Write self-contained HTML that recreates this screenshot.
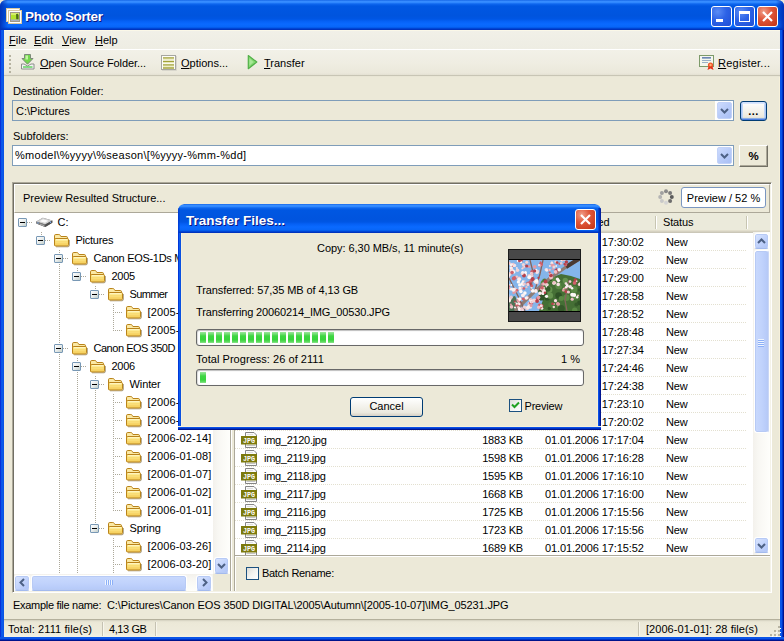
<!DOCTYPE html><html><head><meta charset="utf-8"><title>Photo Sorter</title><style>
*{box-sizing:border-box;margin:0;padding:0}
html,body{width:784px;height:641px;overflow:hidden;background:#ece9d8}
body{position:relative;font-family:"Liberation Sans","DejaVu Sans",sans-serif;font-size:11px;color:#000;line-height:13px}
.a{position:absolute}
.t{position:absolute;white-space:pre;height:13px;line-height:13px}
u{text-decoration:underline;text-underline-offset:1px}
#title{left:0;top:0;width:784px;height:30px;border-radius:6px 6px 0 0;
 background:linear-gradient(to bottom,#0a5be0 0,#3a8eff 1px,#3088fe 2.5px,#0e66ee 4px,#0057e2 6px,#0054de 16px,#0056e4 19px,#0560f4 21px,#0a6aff 24px,#0866f8 27px,#0052e0 28px,#0038c8 29px,#002fb4 30px)}
#title:before{content:"";position:absolute;left:0;top:0;width:8px;height:30px;border-radius:6px 0 0 0;background:linear-gradient(to right,#0033b8,rgba(0,60,220,0))}
#title:after{content:"";position:absolute;right:0;top:0;width:8px;height:30px;border-radius:0 6px 0 0;background:linear-gradient(to left,#0033b8,rgba(0,60,220,0))}
.ttxt{font-weight:bold;font-size:13px;color:#fff;text-shadow:1px 1px 0 #0a1883;height:16px;line-height:16px}
.bl{left:0;top:30px;width:4px;height:611px;background:linear-gradient(to right,#0831d9 0,#0831d9 1px,#0a50e6 1px,#0c5cec 2px,#0a52e2 4px)}
.br{left:779px;top:30px;width:5px;height:611px;background:linear-gradient(to right,#f6f0da 0,#f6f0da 1px,#0a55e8 1px,#0a55e8 3px,#0033c8 3px,#0033c8 4px,#00138c 4px)}
.bb{left:0;top:637px;width:784px;height:4px;background:linear-gradient(to bottom,#0a55e8 0,#0a55e8 2px,#0033c8 2px,#0033c8 3px,#00138c 3px)}
.cb{width:21px;height:21px;border:1px solid #fff;border-radius:3px;background:radial-gradient(circle at 30% 25%,#5a8cf5 0,#2c62e6 45%,#1f4fd6 100%)}
.cb.x{background:radial-gradient(circle at 30% 25%,#f0a08a 0,#e0573a 40%,#c23314 100%)}
.menu{left:4px;top:30px;width:776px;height:19px;background:linear-gradient(to bottom,#f1f0e8,#eeede3);border-top:1px solid #fbf8e8}
.tb{left:4px;top:49px;width:776px;height:28px;background:linear-gradient(to bottom,#fff 0,#fff 1px,#f2f1e8 1px,#efede2 14px,#ebe8db 24px,#e4e1d2 26px,#c8c5b5 26px,#c8c5b5 27px,#e6e3d2 27px,#ece9d8 28px)}
.combo{border:1px solid #7f9db9;background:#fff}
.dd{width:15px;height:17px;border:1px solid #c2d2f8;border-radius:2px;background:linear-gradient(135deg,#cddbfd 0%,#b9ccf9 50%,#a9bff5 100%)}
.btn{border:1px solid #003c74;border-radius:3px;background:linear-gradient(to bottom,#fff 0,#f5f4ef 40%,#eceadf 80%,#d6d0c5 100%);text-align:center}
.btn.def{box-shadow:inset 0 -1px 0 #4a7ce0, inset 0 1px 0 #cfe0fd, inset 1px 0 0 #a8c4f4, inset -1px 0 0 #a8c4f4, inset 0 -2px 0 #89ade4, inset 0 2px 0 #dbe8fe, inset 2px 0 0 #c0d6f8, inset -2px 0 0 #c0d6f8}
.panel{left:12px;top:182px;width:760px;height:411px;border:1px solid;border-color:#aca899 #fff #fff #aca899;box-shadow:inset 1px 1px 0 #716f64,inset -1px -1px 0 #f4f2e8}
.hpanel{left:14px;top:184px;width:756px;height:29px;border:1px solid;border-color:#fff #aca899 #aca899 #fff}
.tree{left:14px;top:213px;width:216px;height:378px;background:#fff;overflow:hidden}
.list{left:234px;top:213px;width:536px;height:342px;background:#fff;border-left:1px solid #aca899;overflow:hidden}
.hdr{left:0;top:0;width:535px;height:20px;background:#ebeadb;border-bottom:1px solid #cbc7b8;box-shadow:inset 0 -1px 0 #d6d2c2, inset 0 -2px 0 #e2decd}
.hs{width:1px;height:13px;top:3px;background:#c7c5b2;box-shadow:1px 0 0 #fff}
.row{left:0;width:512px;height:18px;background:linear-gradient(to right,#e3e0d0 50%,#fff 50%) 0 17px/2px 1px repeat-x}
.sbv{width:17px;background:linear-gradient(to right,#f3f1ec 0,#f8f7f3 30%,#fefefb 100%)}
.sbh{height:17px;background:linear-gradient(to bottom,#f3f1ec 0,#f8f7f3 30%,#fefefb 100%)}
.sbtn{width:16px;height:16px;border:1px solid #fff;border-bottom-color:#a3baee;border-radius:3px;background:linear-gradient(135deg,#dbe6fe 0%,#c3d4fc 50%,#aec3f7 100%);box-shadow:inset 0 0 0 1px #b7caf5}
.thv{width:16px;border:1px solid #fff;border-right-color:#c9d6f6;border-radius:3px;background:linear-gradient(to right,#c9d9fd 0,#c1d3fc 50%,#b5c9f8 100%);box-shadow:inset 0 0 0 1px #b7caf5}
.thh{height:16px;border:1px solid #fff;border-bottom-color:#a3baee;border-radius:3px;background:linear-gradient(to bottom,#c9d9fd 0,#c1d3fc 50%,#b5c9f8 100%);box-shadow:inset 0 0 0 1px #b7caf5}
.pm{width:9px;height:9px;border:1px solid #7898b5;border-radius:1px;background:linear-gradient(135deg,#fff 0,#e8eceb 50%,#c3cfcb 100%)}
.pm:after{content:"";position:absolute;left:1px;top:3px;width:5px;height:1px;background:#000}
.vd{width:1px;background:repeating-linear-gradient(to bottom,#aca899 0,#aca899 1px,transparent 1px,transparent 2px)}
.hd{height:1px;background:repeating-linear-gradient(to right,#aca899 0,#aca899 1px,transparent 1px,transparent 2px)}
.chk{width:13px;height:13px;border:1px solid #1c5180;background:linear-gradient(135deg,#dcdcd7 0,#f3f3f0 50%,#fff 100%)}
.dlg{left:178px;top:204px;width:423px;height:226px;background:#ece9d8;border-radius:6px 6px 0 0;overflow:hidden}
.dtitle{left:0;top:0;width:423px;height:29px;border-radius:6px 6px 0 0;
 background:linear-gradient(to bottom,#0a5be0 0,#3a8eff 1px,#3088fe 2.5px,#0e66ee 4px,#0057e2 6px,#0054de 15px,#0056e4 18px,#0560f4 20px,#0a6aff 23px,#0866f8 26px,#0052e0 27px,#0038c8 28px,#002fb4 29px)}
.dtitle:after{content:"";position:absolute;right:0;top:4px;width:3px;height:25px;background:linear-gradient(to right,rgba(0,50,200,.35),#0030b8 50%,#001590)}
.dtitle:before{content:"";position:absolute;left:0;top:4px;width:2px;height:25px;background:linear-gradient(to right,#0037d0,rgba(0,70,220,.2))}
.dbl{left:0;top:29px;width:4px;height:197px;background:linear-gradient(to right,#0037d8 0,#0037d8 1px,#0c5cec 1px,#0c5cec 2px,#0a50e0 2px,#0a50e0 3px,#f6f0da 3px)}
.dbr{left:419px;top:29px;width:4px;height:197px;background:linear-gradient(to right,#f6f0da 0,#f6f0da 1px,#0b50e6 1px,#0b50e6 2px,#0034c6 2px,#0034c6 3px,#001590 3px)}
.dbb{left:0;top:222px;width:423px;height:4px;background:linear-gradient(to bottom,#f6f0da 0,#f6f0da 1px,#0b50e6 1px,#0b50e6 2px,#0034c6 2px,#0034c6 3px,#001590 3px)}
.pb{height:17px;border:1px solid #686868;border-radius:3px;background:#fff;box-shadow:inset 0 1px 1px #bebebe, inset 1px 0 1px #e0e0e0}
.ch{top:3px;width:6px;height:11px;background:linear-gradient(to bottom,#9be69b 0,#72de74 18%,#3ed642 36%,#38d43c 70%,#5edb60 88%,#90e490 100%)}
.sbar{left:4px;top:619px;width:776px;height:18px;background:linear-gradient(to bottom,#b4b09c 0,#b4b09c 1px,#d0cdbc 1px,#e2dfce 2px,#eae7d6 3px,#ece9d8 5px,#eeebdc 14px,#f3f1e4 18px)}
.ss{top:622px;width:1px;height:14px;background:#c5c2b2;box-shadow:1px 0 0 #f8f6ec}
</style></head><body>
<div class="a" id="title"></div>
<div class="a bl"></div><div class="a br"></div><div class="a bb"></div>
<svg class="a" style="left:6px;top:8px" width="16" height="16" viewBox="0 0 16 16"><rect x=".5" y=".5" width="13" height="13" fill="#fff" stroke="#d8c8a0"/><rect x="2" y="2" width="11" height="11" fill="#94d808"/><rect x="2.500" y="2.500" width="13" height="13" fill="#fff" stroke="#d8c8a0"/><rect x="4.500" y="4.500" width="9" height="9" fill="#b4e42c" stroke="#a09888"/><rect x="5" y="5" width="8" height="2" fill="#d4ee6a"/><path d="M10 6.200 q2 -1.200 2.500 .8 v4.500 h-2.200z" fill="#4a6a18"/><rect x="5" y="11.500" width="8" height="1.500" fill="#a8b0c0"/></svg>
<div class="t ttxt" style="left:25px;top:9px;letter-spacing:-0.35px;font-size:13.5px">Photo Sorter</div>
<div class="a cb" style="left:711px;top:6px"><div class="a" style="left:4px;top:12px;width:7px;height:3px;background:#fff"></div></div>
<div class="a cb" style="left:734px;top:6px"><div class="a" style="left:4px;top:4px;width:11px;height:11px;border:1px solid #fff;border-top-width:3px"></div></div>
<div class="a cb x" style="left:757px;top:6px"><svg class="a" style="left:3px;top:3px" width="13" height="13" viewBox="0 0 13 13"><path d="M2 2 L11 11 M11 2 L2 11" stroke="#fff" stroke-width="2.2"/></svg></div>
<div class="a menu"></div>
<div class="t" style="left:9px;top:34px"><u>F</u>ile</div>
<div class="t" style="left:34px;top:34px"><u>E</u>dit</div>
<div class="t" style="left:62px;top:34px"><u>V</u>iew</div>
<div class="t" style="left:95px;top:34px"><u>H</u>elp</div>
<div class="a tb"></div>
<div class="a" style="left:9px;top:55px;width:2px;height:19px;background:repeating-linear-gradient(to bottom,#b5b2a0 0,#b5b2a0 2px,transparent 2px,transparent 4px)"></div>
<svg class="a" style="left:20px;top:54px" width="16" height="16" viewBox="0 0 16 16"><path d="M4.500 .5 H10.5 V4.500 H13 L7.500 10.200 L2 4.500 H4.500Z" fill="#74d84e" stroke="#7d8a7a" stroke-width="1"/><path d="M5.500 1.500 H8 V5.500 H5.500Z" fill="#c4f4a4"/><path d="M1.500 10 H4 L7.500 12 L11 10 H14 V15 H1.500Z" fill="#f4f4f4" stroke="#8c8c8c"/><path d="M3 13 H12.5" stroke="#3cc83c" stroke-width="1.200"/></svg>
<div class="t" style="left:40px;top:57px;letter-spacing:-0.08px"><u>O</u>pen Source Folder...</div>
<svg class="a" style="left:160px;top:54px" width="17" height="17" viewBox="0 0 17 17"><rect x="1.500" y="1.500" width="14" height="14" fill="#fdfdf8" stroke="#a6a6a0"/><path d="M2 16.500H16.500V2" stroke="#d8d6cc" fill="none"/><path d="M3 4H14M3 7.500H14M3 11H14M3 14H14" stroke="#a2a238" stroke-width="1.300"/><path d="M3 5.200H14M3 8.700H14M3 12.200H14" stroke="#e6e6b4" stroke-width="1"/></svg>
<div class="t" style="left:181px;top:57px"><u>O</u>ptions...</div>
<svg class="a" style="left:246px;top:54px" width="14" height="17" viewBox="0 0 14 17"><path d="M2.300 1.500 L10.800 8 L2.300 14.700Z" fill="#84da72" stroke="#52b048" stroke-width="1.200" stroke-linejoin="round"/><path d="M3.500 4.500 L7.500 8 L3.500 11.500Z" fill="#a8e898"/></svg>
<div class="t" style="left:264px;top:57px"><u>T</u>ransfer</div>
<svg class="a" style="left:699px;top:54px" width="17" height="17" viewBox="0 0 17 17"><rect x=".5" y="1.500" width="14" height="11" fill="#f4f7ee" stroke="#7d9a6a"/><path d="M3 4.500H12M3 6.500H12M3 8.500H9" stroke="#9ab0c8" stroke-width="1"/><path d="M3 3.500H12" stroke="#6f86b5" stroke-width="1"/><circle cx="11.5" cy="11" r="2.600" fill="#f0552a"/><path d="M9.500 12.5 L8.500 16 L11.5 14.500 L14.500 16 L13.5 12.5Z" fill="#e2341a"/><circle cx="11.5" cy="11" r="1.200" fill="#ffb070"/></svg>
<div class="t" style="left:718px;top:57px;letter-spacing:0.25px"><u>R</u>egister...</div>
<div class="t" style="left:13px;top:85px;letter-spacing:-0.1px">Destination Folder:</div>
<div class="a combo" style="left:12px;top:100px;width:722px;height:21px;background:#ece9d8"></div>
<div class="t" style="left:16px;top:105px">C:\Pictures</div>
<div class="a" style="left:715px;top:101px;width:18px;height:19px;background:#fff"></div>
<div class="a dd" style="left:717px;top:102px"></div><svg class="a" style="left:720px;top:108px" width="9" height="6" viewBox="0 0 9 6"><path d="M1 1 L4.5 4.5 L8 1" fill="none" stroke="#4d6185" stroke-width="2"/></svg>
<div class="a btn def" style="left:740px;top:101px;width:27px;height:20px"><b style="position:absolute;left:0;width:25px;top:3px;letter-spacing:0.4px">...</b></div>
<div class="t" style="left:13px;top:130px">Subfolders:</div>
<div class="a combo" style="left:12px;top:145px;width:722px;height:21px"></div>
<div class="t" style="left:15px;top:149px;letter-spacing:0.28px">%model\%yyyy\%season\[%yyyy-%mm-%dd]</div>
<div class="a dd" style="left:717px;top:147px"></div><svg class="a" style="left:720px;top:153px" width="9" height="6" viewBox="0 0 9 6"><path d="M1 1 L4.5 4.5 L8 1" fill="none" stroke="#4d6185" stroke-width="2"/></svg>
<div class="a" style="left:739px;top:145px;width:29px;height:22px;background:#ece9d8;border:1px solid;border-color:#fff #716f64 #716f64 #fff;box-shadow:inset -1px -1px 0 #aca899;text-align:center"><b style="position:absolute;left:0;width:27px;top:4px;font-size:11.5px">%</b></div>
<div class="a panel"></div><div class="a hpanel"></div>
<div class="t" style="left:23px;top:192px">Preview Resulted Structure...</div>
<svg class="a" style="left:658px;top:189px" width="16" height="16" viewBox="0 0 16 16"><circle cx="8.00" cy="2.20" r="2" fill="#8a8a8a"/><circle cx="12.10" cy="3.90" r="2" fill="#787878"/><circle cx="13.80" cy="8.00" r="2" fill="#5c5c5c"/><circle cx="12.10" cy="12.10" r="2" fill="#6e6e6e"/><circle cx="8.00" cy="13.80" r="2" fill="#d4d4d4"/><circle cx="3.90" cy="12.10" r="2" fill="#c8c8c8"/><circle cx="2.20" cy="8.00" r="2" fill="#b4b4b4"/><circle cx="3.90" cy="3.90" r="2" fill="#a0a0a0"/></svg>
<div class="a btn" style="left:681px;top:187px;width:85px;height:21px;border-color:#7a96c0;background:#fff"><span class="t" style="left:0;width:83px;top:4px;text-align:center">Preview / 52 %</span></div>
<div class="a tree">
<div class="a vd" style="left:27px;top:19px;height:9px"></div>
<div class="a vd" style="left:45px;top:37px;height:325px"></div>
<div class="a vd" style="left:63px;top:55px;height:9px"></div>
<div class="a vd" style="left:81px;top:73px;height:9px"></div>
<div class="a vd" style="left:99px;top:91px;height:27px"></div>
<div class="a vd" style="left:63px;top:145px;height:217px"></div>
<div class="a vd" style="left:81px;top:163px;height:153px"></div>
<div class="a vd" style="left:99px;top:181px;height:117px"></div>
<div class="a vd" style="left:99px;top:325px;height:37px"></div>
<div class="a hd" style="left:13px;top:9px;width:5px"></div>
<div class="a pm" style="left:4px;top:5px"></div>
<svg class="a" style="left:22px;top:1px" width="17" height="16" viewBox="0 0 17 16"><path d="M0.300 7.400 L6.800 3.800 L16.300 6.600 L16.300 8.800 L9.200 13 L0.300 9.600Z" fill="#6a6a6a"/><path d="M0.300 7.400 L6.800 3.800 L16.300 6.600 L9.200 10.500Z" fill="#cfcfcf"/><path d="M3.500 7.200 L7 5.200 L12.500 6.800 L9 8.800Z" fill="#fafafa"/><path d="M0.300 7.400 L9.200 10.500 V13 L0.300 9.600Z" fill="#7a7a7a"/><path d="M9.200 10.500 L16.300 6.600 V8.800 L9.200 13Z" fill="#4e4e4e"/><circle cx="2" cy="8.900" r=".7" fill="#7fb4ff"/><circle cx="14.500" cy="8.300" r=".7" fill="#7fb4ff"/><path d="M4 10.200 L8 11.700" stroke="#b8b8b8" stroke-width=".8"/></svg>
<div class="t" style="left:43.5px;top:3px;letter-spacing:0.00px">C:</div>
<div class="a hd" style="left:31px;top:27px;width:5px"></div>
<div class="a pm" style="left:22px;top:23px"></div>
<svg class="a" style="left:40px;top:19px" width="16" height="16" viewBox="0 0 16 16"><path d="M0.500 13 V3.800 Q0.500 2.500 1.800 2.500 H4.800 Q5.800 2.500 6.300 3.400 L6.900 4.500 H12.2 Q13.5 4.500 13.5 5.800 V13Z" fill="#fbe9a4" stroke="#b9831a"/><path d="M2 14.800 H14 Q15.400 14.700 15.400 13.300 V8" fill="none" stroke="#6d5a2a" stroke-opacity=".55"/><rect x="0.500" y="6.500" width="14" height="7.500" rx="1.200" fill="#f6d262" stroke="#b9831a"/><rect x="1.300" y="7.300" width="12.400" height="2" fill="#fde98e"/><rect x="1.300" y="9.300" width="12.400" height="2" fill="#fade78"/><path d="M2 7.600H13.500" stroke="#fff6c4" stroke-width="1"/></svg>
<div class="t" style="left:61.5px;top:21px;letter-spacing:-0.25px">Pictures</div>
<div class="a hd" style="left:49px;top:45px;width:5px"></div>
<div class="a pm" style="left:40px;top:41px"></div>
<svg class="a" style="left:58px;top:37px" width="16" height="16" viewBox="0 0 16 16"><path d="M0.500 13 V3.800 Q0.500 2.500 1.800 2.500 H4.800 Q5.800 2.500 6.300 3.400 L6.900 4.500 H12.2 Q13.5 4.500 13.5 5.800 V13Z" fill="#fbe9a4" stroke="#b9831a"/><path d="M2 14.800 H14 Q15.400 14.700 15.400 13.300 V8" fill="none" stroke="#6d5a2a" stroke-opacity=".55"/><rect x="0.500" y="6.500" width="14" height="7.500" rx="1.200" fill="#f6d262" stroke="#b9831a"/><rect x="1.300" y="7.300" width="12.400" height="2" fill="#fde98e"/><rect x="1.300" y="9.300" width="12.400" height="2" fill="#fade78"/><path d="M2 7.600H13.500" stroke="#fff6c4" stroke-width="1"/></svg>
<div class="t" style="left:79.5px;top:39px;letter-spacing:-0.30px">Canon EOS-1Ds Mark II</div>
<div class="a hd" style="left:67px;top:63px;width:5px"></div>
<div class="a pm" style="left:58px;top:59px"></div>
<svg class="a" style="left:76px;top:55px" width="16" height="16" viewBox="0 0 16 16"><path d="M0.500 13 V3.800 Q0.500 2.500 1.800 2.500 H4.800 Q5.800 2.500 6.300 3.400 L6.900 4.500 H12.2 Q13.5 4.500 13.5 5.800 V13Z" fill="#fbe9a4" stroke="#b9831a"/><path d="M2 14.800 H14 Q15.400 14.700 15.400 13.300 V8" fill="none" stroke="#6d5a2a" stroke-opacity=".55"/><rect x="0.500" y="6.500" width="14" height="7.500" rx="1.200" fill="#f6d262" stroke="#b9831a"/><rect x="1.300" y="7.300" width="12.400" height="2" fill="#fde98e"/><rect x="1.300" y="9.300" width="12.400" height="2" fill="#fade78"/><path d="M2 7.600H13.500" stroke="#fff6c4" stroke-width="1"/></svg>
<div class="t" style="left:97.5px;top:57px;letter-spacing:-0.30px">2005</div>
<div class="a hd" style="left:85px;top:81px;width:5px"></div>
<div class="a pm" style="left:76px;top:77px"></div>
<svg class="a" style="left:94px;top:73px" width="16" height="16" viewBox="0 0 16 16"><path d="M0.500 13 V3.800 Q0.500 2.500 1.800 2.500 H4.800 Q5.800 2.500 6.300 3.400 L6.900 4.500 H12.2 Q13.5 4.500 13.5 5.800 V13Z" fill="#fbe9a4" stroke="#b9831a"/><path d="M2 14.800 H14 Q15.400 14.700 15.400 13.300 V8" fill="none" stroke="#6d5a2a" stroke-opacity=".55"/><rect x="0.500" y="6.500" width="14" height="7.500" rx="1.200" fill="#f6d262" stroke="#b9831a"/><rect x="1.300" y="7.300" width="12.400" height="2" fill="#fde98e"/><rect x="1.300" y="9.300" width="12.400" height="2" fill="#fade78"/><path d="M2 7.600H13.500" stroke="#fff6c4" stroke-width="1"/></svg>
<div class="t" style="left:115.5px;top:75px;letter-spacing:-0.65px">Summer</div>
<div class="a hd" style="left:101px;top:99px;width:7px"></div>
<svg class="a" style="left:112px;top:91px" width="16" height="16" viewBox="0 0 16 16"><path d="M0.500 13 V3.800 Q0.500 2.500 1.800 2.500 H4.800 Q5.800 2.500 6.300 3.400 L6.900 4.500 H12.2 Q13.5 4.500 13.5 5.800 V13Z" fill="#fbe9a4" stroke="#b9831a"/><path d="M2 14.800 H14 Q15.400 14.700 15.400 13.300 V8" fill="none" stroke="#6d5a2a" stroke-opacity=".55"/><rect x="0.500" y="6.500" width="14" height="7.500" rx="1.200" fill="#f6d262" stroke="#b9831a"/><rect x="1.300" y="7.300" width="12.400" height="2" fill="#fde98e"/><rect x="1.300" y="9.300" width="12.400" height="2" fill="#fade78"/><path d="M2 7.600H13.500" stroke="#fff6c4" stroke-width="1"/></svg>
<div class="t" style="left:133.5px;top:93px;letter-spacing:0.12px">[2005-07-16]</div>
<div class="a hd" style="left:101px;top:117px;width:7px"></div>
<svg class="a" style="left:112px;top:109px" width="16" height="16" viewBox="0 0 16 16"><path d="M0.500 13 V3.800 Q0.500 2.500 1.800 2.500 H4.800 Q5.800 2.500 6.300 3.400 L6.900 4.500 H12.2 Q13.5 4.500 13.5 5.800 V13Z" fill="#fbe9a4" stroke="#b9831a"/><path d="M2 14.800 H14 Q15.400 14.700 15.400 13.300 V8" fill="none" stroke="#6d5a2a" stroke-opacity=".55"/><rect x="0.500" y="6.500" width="14" height="7.500" rx="1.200" fill="#f6d262" stroke="#b9831a"/><rect x="1.300" y="7.300" width="12.400" height="2" fill="#fde98e"/><rect x="1.300" y="9.300" width="12.400" height="2" fill="#fade78"/><path d="M2 7.600H13.500" stroke="#fff6c4" stroke-width="1"/></svg>
<div class="t" style="left:133.5px;top:111px;letter-spacing:0.12px">[2005-07-02]</div>
<div class="a hd" style="left:49px;top:135px;width:5px"></div>
<div class="a pm" style="left:40px;top:131px"></div>
<svg class="a" style="left:58px;top:127px" width="16" height="16" viewBox="0 0 16 16"><path d="M0.500 13 V3.800 Q0.500 2.500 1.800 2.500 H4.800 Q5.800 2.500 6.300 3.400 L6.900 4.500 H12.2 Q13.5 4.500 13.5 5.800 V13Z" fill="#fbe9a4" stroke="#b9831a"/><path d="M2 14.800 H14 Q15.400 14.700 15.400 13.300 V8" fill="none" stroke="#6d5a2a" stroke-opacity=".55"/><rect x="0.500" y="6.500" width="14" height="7.500" rx="1.200" fill="#f6d262" stroke="#b9831a"/><rect x="1.300" y="7.300" width="12.400" height="2" fill="#fde98e"/><rect x="1.300" y="9.300" width="12.400" height="2" fill="#fade78"/><path d="M2 7.600H13.500" stroke="#fff6c4" stroke-width="1"/></svg>
<div class="t" style="left:79.5px;top:129px;letter-spacing:-0.47px">Canon EOS 350D DIGITAL</div>
<div class="a hd" style="left:67px;top:153px;width:5px"></div>
<div class="a pm" style="left:58px;top:149px"></div>
<svg class="a" style="left:76px;top:145px" width="16" height="16" viewBox="0 0 16 16"><path d="M0.500 13 V3.800 Q0.500 2.500 1.800 2.500 H4.800 Q5.800 2.500 6.300 3.400 L6.900 4.500 H12.2 Q13.5 4.500 13.5 5.800 V13Z" fill="#fbe9a4" stroke="#b9831a"/><path d="M2 14.800 H14 Q15.400 14.700 15.400 13.300 V8" fill="none" stroke="#6d5a2a" stroke-opacity=".55"/><rect x="0.500" y="6.500" width="14" height="7.500" rx="1.200" fill="#f6d262" stroke="#b9831a"/><rect x="1.300" y="7.300" width="12.400" height="2" fill="#fde98e"/><rect x="1.300" y="9.300" width="12.400" height="2" fill="#fade78"/><path d="M2 7.600H13.500" stroke="#fff6c4" stroke-width="1"/></svg>
<div class="t" style="left:97.5px;top:147px;letter-spacing:-0.30px">2006</div>
<div class="a hd" style="left:85px;top:171px;width:5px"></div>
<div class="a pm" style="left:76px;top:167px"></div>
<svg class="a" style="left:94px;top:163px" width="16" height="16" viewBox="0 0 16 16"><path d="M0.500 13 V3.800 Q0.500 2.500 1.800 2.500 H4.800 Q5.800 2.500 6.300 3.400 L6.900 4.500 H12.2 Q13.5 4.500 13.5 5.800 V13Z" fill="#fbe9a4" stroke="#b9831a"/><path d="M2 14.800 H14 Q15.400 14.700 15.400 13.300 V8" fill="none" stroke="#6d5a2a" stroke-opacity=".55"/><rect x="0.500" y="6.500" width="14" height="7.500" rx="1.200" fill="#f6d262" stroke="#b9831a"/><rect x="1.300" y="7.300" width="12.400" height="2" fill="#fde98e"/><rect x="1.300" y="9.300" width="12.400" height="2" fill="#fade78"/><path d="M2 7.600H13.500" stroke="#fff6c4" stroke-width="1"/></svg>
<div class="t" style="left:115.5px;top:165px;letter-spacing:-0.10px">Winter</div>
<div class="a hd" style="left:101px;top:189px;width:7px"></div>
<svg class="a" style="left:112px;top:181px" width="16" height="16" viewBox="0 0 16 16"><path d="M0.500 13 V3.800 Q0.500 2.500 1.800 2.500 H4.800 Q5.800 2.500 6.300 3.400 L6.900 4.500 H12.2 Q13.5 4.500 13.5 5.800 V13Z" fill="#fbe9a4" stroke="#b9831a"/><path d="M2 14.800 H14 Q15.400 14.700 15.400 13.300 V8" fill="none" stroke="#6d5a2a" stroke-opacity=".55"/><rect x="0.500" y="6.500" width="14" height="7.500" rx="1.200" fill="#f6d262" stroke="#b9831a"/><rect x="1.300" y="7.300" width="12.400" height="2" fill="#fde98e"/><rect x="1.300" y="9.300" width="12.400" height="2" fill="#fade78"/><path d="M2 7.600H13.500" stroke="#fff6c4" stroke-width="1"/></svg>
<div class="t" style="left:133.5px;top:183px;letter-spacing:0.12px">[2006-02-26]</div>
<div class="a hd" style="left:101px;top:207px;width:7px"></div>
<svg class="a" style="left:112px;top:199px" width="16" height="16" viewBox="0 0 16 16"><path d="M0.500 13 V3.800 Q0.500 2.500 1.800 2.500 H4.800 Q5.800 2.500 6.300 3.400 L6.900 4.500 H12.2 Q13.5 4.500 13.5 5.800 V13Z" fill="#fbe9a4" stroke="#b9831a"/><path d="M2 14.800 H14 Q15.400 14.700 15.400 13.300 V8" fill="none" stroke="#6d5a2a" stroke-opacity=".55"/><rect x="0.500" y="6.500" width="14" height="7.500" rx="1.200" fill="#f6d262" stroke="#b9831a"/><rect x="1.300" y="7.300" width="12.400" height="2" fill="#fde98e"/><rect x="1.300" y="9.300" width="12.400" height="2" fill="#fade78"/><path d="M2 7.600H13.500" stroke="#fff6c4" stroke-width="1"/></svg>
<div class="t" style="left:133.5px;top:201px;letter-spacing:0.12px">[2006-02-19]</div>
<div class="a hd" style="left:101px;top:225px;width:7px"></div>
<svg class="a" style="left:112px;top:217px" width="16" height="16" viewBox="0 0 16 16"><path d="M0.500 13 V3.800 Q0.500 2.500 1.800 2.500 H4.800 Q5.800 2.500 6.300 3.400 L6.900 4.500 H12.2 Q13.5 4.500 13.5 5.800 V13Z" fill="#fbe9a4" stroke="#b9831a"/><path d="M2 14.800 H14 Q15.400 14.700 15.400 13.300 V8" fill="none" stroke="#6d5a2a" stroke-opacity=".55"/><rect x="0.500" y="6.500" width="14" height="7.500" rx="1.200" fill="#f6d262" stroke="#b9831a"/><rect x="1.300" y="7.300" width="12.400" height="2" fill="#fde98e"/><rect x="1.300" y="9.300" width="12.400" height="2" fill="#fade78"/><path d="M2 7.600H13.500" stroke="#fff6c4" stroke-width="1"/></svg>
<div class="t" style="left:133.5px;top:219px;letter-spacing:0.12px">[2006-02-14]</div>
<div class="a hd" style="left:101px;top:243px;width:7px"></div>
<svg class="a" style="left:112px;top:235px" width="16" height="16" viewBox="0 0 16 16"><path d="M0.500 13 V3.800 Q0.500 2.500 1.800 2.500 H4.800 Q5.800 2.500 6.300 3.400 L6.900 4.500 H12.2 Q13.5 4.500 13.5 5.800 V13Z" fill="#fbe9a4" stroke="#b9831a"/><path d="M2 14.800 H14 Q15.400 14.700 15.400 13.300 V8" fill="none" stroke="#6d5a2a" stroke-opacity=".55"/><rect x="0.500" y="6.500" width="14" height="7.500" rx="1.200" fill="#f6d262" stroke="#b9831a"/><rect x="1.300" y="7.300" width="12.400" height="2" fill="#fde98e"/><rect x="1.300" y="9.300" width="12.400" height="2" fill="#fade78"/><path d="M2 7.600H13.500" stroke="#fff6c4" stroke-width="1"/></svg>
<div class="t" style="left:133.5px;top:237px;letter-spacing:0.12px">[2006-01-08]</div>
<div class="a hd" style="left:101px;top:261px;width:7px"></div>
<svg class="a" style="left:112px;top:253px" width="16" height="16" viewBox="0 0 16 16"><path d="M0.500 13 V3.800 Q0.500 2.500 1.800 2.500 H4.800 Q5.800 2.500 6.300 3.400 L6.900 4.500 H12.2 Q13.5 4.500 13.5 5.800 V13Z" fill="#fbe9a4" stroke="#b9831a"/><path d="M2 14.800 H14 Q15.400 14.700 15.400 13.300 V8" fill="none" stroke="#6d5a2a" stroke-opacity=".55"/><rect x="0.500" y="6.500" width="14" height="7.500" rx="1.200" fill="#f6d262" stroke="#b9831a"/><rect x="1.300" y="7.300" width="12.400" height="2" fill="#fde98e"/><rect x="1.300" y="9.300" width="12.400" height="2" fill="#fade78"/><path d="M2 7.600H13.500" stroke="#fff6c4" stroke-width="1"/></svg>
<div class="t" style="left:133.5px;top:255px;letter-spacing:0.12px">[2006-01-07]</div>
<div class="a hd" style="left:101px;top:279px;width:7px"></div>
<svg class="a" style="left:112px;top:271px" width="16" height="16" viewBox="0 0 16 16"><path d="M0.500 13 V3.800 Q0.500 2.500 1.800 2.500 H4.800 Q5.800 2.500 6.300 3.400 L6.900 4.500 H12.2 Q13.5 4.500 13.5 5.800 V13Z" fill="#fbe9a4" stroke="#b9831a"/><path d="M2 14.800 H14 Q15.400 14.700 15.400 13.300 V8" fill="none" stroke="#6d5a2a" stroke-opacity=".55"/><rect x="0.500" y="6.500" width="14" height="7.500" rx="1.200" fill="#f6d262" stroke="#b9831a"/><rect x="1.300" y="7.300" width="12.400" height="2" fill="#fde98e"/><rect x="1.300" y="9.300" width="12.400" height="2" fill="#fade78"/><path d="M2 7.600H13.500" stroke="#fff6c4" stroke-width="1"/></svg>
<div class="t" style="left:133.5px;top:273px;letter-spacing:0.12px">[2006-01-02]</div>
<div class="a hd" style="left:101px;top:297px;width:7px"></div>
<svg class="a" style="left:112px;top:289px" width="16" height="16" viewBox="0 0 16 16"><path d="M0.500 13 V3.800 Q0.500 2.500 1.800 2.500 H4.800 Q5.800 2.500 6.300 3.400 L6.900 4.500 H12.2 Q13.5 4.500 13.5 5.800 V13Z" fill="#fbe9a4" stroke="#b9831a"/><path d="M2 14.800 H14 Q15.400 14.700 15.400 13.300 V8" fill="none" stroke="#6d5a2a" stroke-opacity=".55"/><rect x="0.500" y="6.500" width="14" height="7.500" rx="1.200" fill="#f6d262" stroke="#b9831a"/><rect x="1.300" y="7.300" width="12.400" height="2" fill="#fde98e"/><rect x="1.300" y="9.300" width="12.400" height="2" fill="#fade78"/><path d="M2 7.600H13.500" stroke="#fff6c4" stroke-width="1"/></svg>
<div class="t" style="left:133.5px;top:291px;letter-spacing:0.12px">[2006-01-01]</div>
<div class="a hd" style="left:85px;top:315px;width:5px"></div>
<div class="a pm" style="left:76px;top:311px"></div>
<svg class="a" style="left:94px;top:307px" width="16" height="16" viewBox="0 0 16 16"><path d="M0.500 13 V3.800 Q0.500 2.500 1.800 2.500 H4.800 Q5.800 2.500 6.300 3.400 L6.900 4.500 H12.2 Q13.5 4.500 13.5 5.800 V13Z" fill="#fbe9a4" stroke="#b9831a"/><path d="M2 14.800 H14 Q15.400 14.700 15.400 13.300 V8" fill="none" stroke="#6d5a2a" stroke-opacity=".55"/><rect x="0.500" y="6.500" width="14" height="7.500" rx="1.200" fill="#f6d262" stroke="#b9831a"/><rect x="1.300" y="7.300" width="12.400" height="2" fill="#fde98e"/><rect x="1.300" y="9.300" width="12.400" height="2" fill="#fade78"/><path d="M2 7.600H13.500" stroke="#fff6c4" stroke-width="1"/></svg>
<div class="t" style="left:115.5px;top:309px;letter-spacing:-0.10px">Spring</div>
<div class="a hd" style="left:101px;top:333px;width:7px"></div>
<svg class="a" style="left:112px;top:325px" width="16" height="16" viewBox="0 0 16 16"><path d="M0.500 13 V3.800 Q0.500 2.500 1.800 2.500 H4.800 Q5.800 2.500 6.300 3.400 L6.900 4.500 H12.2 Q13.5 4.500 13.5 5.800 V13Z" fill="#fbe9a4" stroke="#b9831a"/><path d="M2 14.800 H14 Q15.400 14.700 15.400 13.300 V8" fill="none" stroke="#6d5a2a" stroke-opacity=".55"/><rect x="0.500" y="6.500" width="14" height="7.500" rx="1.200" fill="#f6d262" stroke="#b9831a"/><rect x="1.300" y="7.300" width="12.400" height="2" fill="#fde98e"/><rect x="1.300" y="9.300" width="12.400" height="2" fill="#fade78"/><path d="M2 7.600H13.500" stroke="#fff6c4" stroke-width="1"/></svg>
<div class="t" style="left:133.5px;top:327px;letter-spacing:0.12px">[2006-03-26]</div>
<div class="a hd" style="left:101px;top:351px;width:7px"></div>
<svg class="a" style="left:112px;top:343px" width="16" height="16" viewBox="0 0 16 16"><path d="M0.500 13 V3.800 Q0.500 2.500 1.800 2.500 H4.800 Q5.800 2.500 6.300 3.400 L6.900 4.500 H12.2 Q13.5 4.500 13.5 5.800 V13Z" fill="#fbe9a4" stroke="#b9831a"/><path d="M2 14.800 H14 Q15.400 14.700 15.400 13.300 V8" fill="none" stroke="#6d5a2a" stroke-opacity=".55"/><rect x="0.500" y="6.500" width="14" height="7.500" rx="1.200" fill="#f6d262" stroke="#b9831a"/><rect x="1.300" y="7.300" width="12.400" height="2" fill="#fde98e"/><rect x="1.300" y="9.300" width="12.400" height="2" fill="#fade78"/><path d="M2 7.600H13.500" stroke="#fff6c4" stroke-width="1"/></svg>
<div class="t" style="left:133.5px;top:345px;letter-spacing:0.12px">[2006-03-20]</div>
<div class="a sbv" style="left:199px;top:0;height:361px"></div>
<div class="a sbtn" style="left:200px;top:344px;width:15px;height:17px"></div><svg class="a" style="left:203px;top:350px" width="9" height="6" viewBox="0 0 9 6"><path d="M1 1 L4.5 4.5 L8 1" fill="none" stroke="#4d6185" stroke-width="2"/></svg>
<div class="a sbh" style="left:0;top:361px;width:199px"></div>
<div class="a sbtn" style="left:0;top:362px;width:16px;height:16px"></div><svg class="a" style="left:5px;top:365px" width="6" height="9" viewBox="0 0 6 9"><path d="M5 1 L1.5 4.5 L5 8" fill="none" stroke="#4d6185" stroke-width="2"/></svg>
<div class="a sbtn" style="left:182px;top:362px;width:16px;height:16px"></div><svg class="a" style="left:188px;top:365px" width="6" height="9" viewBox="0 0 6 9"><path d="M1 1 L4.5 4.5 L1 8" fill="none" stroke="#4d6185" stroke-width="2"/></svg>
<div class="a thh" style="left:17px;top:362px;width:156px;height:16px"><div class="a" style="left:73px;top:4px;width:8px;height:5px;background:repeating-linear-gradient(to right,#eef4fe 0,#eef4fe 1px,#8cb0f8 1px,#8cb0f8 2px)"></div></div>
<div class="a" style="left:199px;top:361px;width:18px;height:18px;background:#ece9d8"></div>
</div>
<div class="a list">
<div class="a hdr"></div>
<div class="t" style="left:7px;top:3px">File Name</div><div class="t" style="left:236px;top:3px">Size</div><div class="t" style="left:308px;top:3px;letter-spacing:-0.1px">Date Modified</div><div class="t" style="left:428px;top:3px;letter-spacing:-0.15px">Status</div>
<div class="a hs" style="left:226px"></div>
<div class="a hs" style="left:300px"></div>
<div class="a hs" style="left:420px"></div>
<div class="a hs" style="left:511px"></div>
<div class="a row" style="top:20px"></div>
<svg class="a" style="left:6px;top:21px" width="16" height="16" viewBox="0 0 16 16"><path d="M4.500 .5 H13 L15.500 3 V15.500 H4.500Z" fill="#fafafa" stroke="#858585"/><path d="M6 2.500H12" stroke="#e0e0e0"/><path d="M5.500 13.500H14.500" stroke="#c4c4c4"/><rect x="0" y="4" width="16" height="8.500" fill="#7d7a0c"/><text x="8" y="10.600" font-family="Liberation Mono,monospace" font-weight="bold" font-size="7" fill="#fff" text-anchor="middle" textLength="12" lengthAdjust="spacingAndGlyphs">JPG</text></svg>
<div class="t" style="left:29px;top:23px;letter-spacing:-0.3px">img_2131.jpg</div>
<div class="t" style="left:203px;width:85px;text-align:right;top:23px;letter-spacing:-0.2px">1702 KB</div>
<div class="t" style="left:310px;top:23px;letter-spacing:-0.12px">01.01.2006 17:30:02</div>
<div class="t" style="left:431px;top:23px;letter-spacing:-0.1px">New</div>
<div class="a row" style="top:38px"></div>
<svg class="a" style="left:6px;top:39px" width="16" height="16" viewBox="0 0 16 16"><path d="M4.500 .5 H13 L15.500 3 V15.500 H4.500Z" fill="#fafafa" stroke="#858585"/><path d="M6 2.500H12" stroke="#e0e0e0"/><path d="M5.500 13.500H14.500" stroke="#c4c4c4"/><rect x="0" y="4" width="16" height="8.500" fill="#7d7a0c"/><text x="8" y="10.600" font-family="Liberation Mono,monospace" font-weight="bold" font-size="7" fill="#fff" text-anchor="middle" textLength="12" lengthAdjust="spacingAndGlyphs">JPG</text></svg>
<div class="t" style="left:29px;top:41px;letter-spacing:-0.3px">img_2130.jpg</div>
<div class="t" style="left:203px;width:85px;text-align:right;top:41px;letter-spacing:-0.2px">1655 KB</div>
<div class="t" style="left:310px;top:41px;letter-spacing:-0.12px">01.01.2006 17:29:02</div>
<div class="t" style="left:431px;top:41px;letter-spacing:-0.1px">New</div>
<div class="a row" style="top:56px"></div>
<svg class="a" style="left:6px;top:57px" width="16" height="16" viewBox="0 0 16 16"><path d="M4.500 .5 H13 L15.500 3 V15.500 H4.500Z" fill="#fafafa" stroke="#858585"/><path d="M6 2.500H12" stroke="#e0e0e0"/><path d="M5.500 13.500H14.500" stroke="#c4c4c4"/><rect x="0" y="4" width="16" height="8.500" fill="#7d7a0c"/><text x="8" y="10.600" font-family="Liberation Mono,monospace" font-weight="bold" font-size="7" fill="#fff" text-anchor="middle" textLength="12" lengthAdjust="spacingAndGlyphs">JPG</text></svg>
<div class="t" style="left:29px;top:59px;letter-spacing:-0.3px">img_2129.jpg</div>
<div class="t" style="left:203px;width:85px;text-align:right;top:59px;letter-spacing:-0.2px">1731 KB</div>
<div class="t" style="left:310px;top:59px;letter-spacing:-0.12px">01.01.2006 17:29:00</div>
<div class="t" style="left:431px;top:59px;letter-spacing:-0.1px">New</div>
<div class="a row" style="top:74px"></div>
<svg class="a" style="left:6px;top:75px" width="16" height="16" viewBox="0 0 16 16"><path d="M4.500 .5 H13 L15.500 3 V15.500 H4.500Z" fill="#fafafa" stroke="#858585"/><path d="M6 2.500H12" stroke="#e0e0e0"/><path d="M5.500 13.500H14.500" stroke="#c4c4c4"/><rect x="0" y="4" width="16" height="8.500" fill="#7d7a0c"/><text x="8" y="10.600" font-family="Liberation Mono,monospace" font-weight="bold" font-size="7" fill="#fff" text-anchor="middle" textLength="12" lengthAdjust="spacingAndGlyphs">JPG</text></svg>
<div class="t" style="left:29px;top:77px;letter-spacing:-0.3px">img_2128.jpg</div>
<div class="t" style="left:203px;width:85px;text-align:right;top:77px;letter-spacing:-0.2px">1690 KB</div>
<div class="t" style="left:310px;top:77px;letter-spacing:-0.12px">01.01.2006 17:28:58</div>
<div class="t" style="left:431px;top:77px;letter-spacing:-0.1px">New</div>
<div class="a row" style="top:92px"></div>
<svg class="a" style="left:6px;top:93px" width="16" height="16" viewBox="0 0 16 16"><path d="M4.500 .5 H13 L15.500 3 V15.500 H4.500Z" fill="#fafafa" stroke="#858585"/><path d="M6 2.500H12" stroke="#e0e0e0"/><path d="M5.500 13.500H14.500" stroke="#c4c4c4"/><rect x="0" y="4" width="16" height="8.500" fill="#7d7a0c"/><text x="8" y="10.600" font-family="Liberation Mono,monospace" font-weight="bold" font-size="7" fill="#fff" text-anchor="middle" textLength="12" lengthAdjust="spacingAndGlyphs">JPG</text></svg>
<div class="t" style="left:29px;top:95px;letter-spacing:-0.3px">img_2127.jpg</div>
<div class="t" style="left:203px;width:85px;text-align:right;top:95px;letter-spacing:-0.2px">1744 KB</div>
<div class="t" style="left:310px;top:95px;letter-spacing:-0.12px">01.01.2006 17:28:52</div>
<div class="t" style="left:431px;top:95px;letter-spacing:-0.1px">New</div>
<div class="a row" style="top:110px"></div>
<svg class="a" style="left:6px;top:111px" width="16" height="16" viewBox="0 0 16 16"><path d="M4.500 .5 H13 L15.500 3 V15.500 H4.500Z" fill="#fafafa" stroke="#858585"/><path d="M6 2.500H12" stroke="#e0e0e0"/><path d="M5.500 13.500H14.500" stroke="#c4c4c4"/><rect x="0" y="4" width="16" height="8.500" fill="#7d7a0c"/><text x="8" y="10.600" font-family="Liberation Mono,monospace" font-weight="bold" font-size="7" fill="#fff" text-anchor="middle" textLength="12" lengthAdjust="spacingAndGlyphs">JPG</text></svg>
<div class="t" style="left:29px;top:113px;letter-spacing:-0.3px">img_2126.jpg</div>
<div class="t" style="left:203px;width:85px;text-align:right;top:113px;letter-spacing:-0.2px">1812 KB</div>
<div class="t" style="left:310px;top:113px;letter-spacing:-0.12px">01.01.2006 17:28:48</div>
<div class="t" style="left:431px;top:113px;letter-spacing:-0.1px">New</div>
<div class="a row" style="top:128px"></div>
<svg class="a" style="left:6px;top:129px" width="16" height="16" viewBox="0 0 16 16"><path d="M4.500 .5 H13 L15.500 3 V15.500 H4.500Z" fill="#fafafa" stroke="#858585"/><path d="M6 2.500H12" stroke="#e0e0e0"/><path d="M5.500 13.500H14.500" stroke="#c4c4c4"/><rect x="0" y="4" width="16" height="8.500" fill="#7d7a0c"/><text x="8" y="10.600" font-family="Liberation Mono,monospace" font-weight="bold" font-size="7" fill="#fff" text-anchor="middle" textLength="12" lengthAdjust="spacingAndGlyphs">JPG</text></svg>
<div class="t" style="left:29px;top:131px;letter-spacing:-0.3px">img_2125.jpg</div>
<div class="t" style="left:203px;width:85px;text-align:right;top:131px;letter-spacing:-0.2px">1633 KB</div>
<div class="t" style="left:310px;top:131px;letter-spacing:-0.12px">01.01.2006 17:27:34</div>
<div class="t" style="left:431px;top:131px;letter-spacing:-0.1px">New</div>
<div class="a row" style="top:146px"></div>
<svg class="a" style="left:6px;top:147px" width="16" height="16" viewBox="0 0 16 16"><path d="M4.500 .5 H13 L15.500 3 V15.500 H4.500Z" fill="#fafafa" stroke="#858585"/><path d="M6 2.500H12" stroke="#e0e0e0"/><path d="M5.500 13.500H14.500" stroke="#c4c4c4"/><rect x="0" y="4" width="16" height="8.500" fill="#7d7a0c"/><text x="8" y="10.600" font-family="Liberation Mono,monospace" font-weight="bold" font-size="7" fill="#fff" text-anchor="middle" textLength="12" lengthAdjust="spacingAndGlyphs">JPG</text></svg>
<div class="t" style="left:29px;top:149px;letter-spacing:-0.3px">img_2124.jpg</div>
<div class="t" style="left:203px;width:85px;text-align:right;top:149px;letter-spacing:-0.2px">1587 KB</div>
<div class="t" style="left:310px;top:149px;letter-spacing:-0.12px">01.01.2006 17:24:46</div>
<div class="t" style="left:431px;top:149px;letter-spacing:-0.1px">New</div>
<div class="a row" style="top:164px"></div>
<svg class="a" style="left:6px;top:165px" width="16" height="16" viewBox="0 0 16 16"><path d="M4.500 .5 H13 L15.500 3 V15.500 H4.500Z" fill="#fafafa" stroke="#858585"/><path d="M6 2.500H12" stroke="#e0e0e0"/><path d="M5.500 13.500H14.500" stroke="#c4c4c4"/><rect x="0" y="4" width="16" height="8.500" fill="#7d7a0c"/><text x="8" y="10.600" font-family="Liberation Mono,monospace" font-weight="bold" font-size="7" fill="#fff" text-anchor="middle" textLength="12" lengthAdjust="spacingAndGlyphs">JPG</text></svg>
<div class="t" style="left:29px;top:167px;letter-spacing:-0.3px">img_2123.jpg</div>
<div class="t" style="left:203px;width:85px;text-align:right;top:167px;letter-spacing:-0.2px">1760 KB</div>
<div class="t" style="left:310px;top:167px;letter-spacing:-0.12px">01.01.2006 17:24:38</div>
<div class="t" style="left:431px;top:167px;letter-spacing:-0.1px">New</div>
<div class="a row" style="top:182px"></div>
<svg class="a" style="left:6px;top:183px" width="16" height="16" viewBox="0 0 16 16"><path d="M4.500 .5 H13 L15.500 3 V15.500 H4.500Z" fill="#fafafa" stroke="#858585"/><path d="M6 2.500H12" stroke="#e0e0e0"/><path d="M5.500 13.500H14.500" stroke="#c4c4c4"/><rect x="0" y="4" width="16" height="8.500" fill="#7d7a0c"/><text x="8" y="10.600" font-family="Liberation Mono,monospace" font-weight="bold" font-size="7" fill="#fff" text-anchor="middle" textLength="12" lengthAdjust="spacingAndGlyphs">JPG</text></svg>
<div class="t" style="left:29px;top:185px;letter-spacing:-0.3px">img_2122.jpg</div>
<div class="t" style="left:203px;width:85px;text-align:right;top:185px;letter-spacing:-0.2px">1802 KB</div>
<div class="t" style="left:310px;top:185px;letter-spacing:-0.12px">01.01.2006 17:23:10</div>
<div class="t" style="left:431px;top:185px;letter-spacing:-0.1px">New</div>
<div class="a row" style="top:200px"></div>
<svg class="a" style="left:6px;top:201px" width="16" height="16" viewBox="0 0 16 16"><path d="M4.500 .5 H13 L15.500 3 V15.500 H4.500Z" fill="#fafafa" stroke="#858585"/><path d="M6 2.500H12" stroke="#e0e0e0"/><path d="M5.500 13.500H14.500" stroke="#c4c4c4"/><rect x="0" y="4" width="16" height="8.500" fill="#7d7a0c"/><text x="8" y="10.600" font-family="Liberation Mono,monospace" font-weight="bold" font-size="7" fill="#fff" text-anchor="middle" textLength="12" lengthAdjust="spacingAndGlyphs">JPG</text></svg>
<div class="t" style="left:29px;top:203px;letter-spacing:-0.3px">img_2121.jpg</div>
<div class="t" style="left:203px;width:85px;text-align:right;top:203px;letter-spacing:-0.2px">1694 KB</div>
<div class="t" style="left:310px;top:203px;letter-spacing:-0.12px">01.01.2006 17:20:02</div>
<div class="t" style="left:431px;top:203px;letter-spacing:-0.1px">New</div>
<div class="a row" style="top:218px"></div>
<svg class="a" style="left:6px;top:219px" width="16" height="16" viewBox="0 0 16 16"><path d="M4.500 .5 H13 L15.500 3 V15.500 H4.500Z" fill="#fafafa" stroke="#858585"/><path d="M6 2.500H12" stroke="#e0e0e0"/><path d="M5.500 13.500H14.500" stroke="#c4c4c4"/><rect x="0" y="4" width="16" height="8.500" fill="#7d7a0c"/><text x="8" y="10.600" font-family="Liberation Mono,monospace" font-weight="bold" font-size="7" fill="#fff" text-anchor="middle" textLength="12" lengthAdjust="spacingAndGlyphs">JPG</text></svg>
<div class="t" style="left:29px;top:221px;letter-spacing:-0.3px">img_2120.jpg</div>
<div class="t" style="left:203px;width:85px;text-align:right;top:221px;letter-spacing:-0.2px">1883 KB</div>
<div class="t" style="left:310px;top:221px;letter-spacing:-0.12px">01.01.2006 17:17:04</div>
<div class="t" style="left:431px;top:221px;letter-spacing:-0.1px">New</div>
<div class="a row" style="top:236px"></div>
<svg class="a" style="left:6px;top:237px" width="16" height="16" viewBox="0 0 16 16"><path d="M4.500 .5 H13 L15.500 3 V15.500 H4.500Z" fill="#fafafa" stroke="#858585"/><path d="M6 2.500H12" stroke="#e0e0e0"/><path d="M5.500 13.500H14.500" stroke="#c4c4c4"/><rect x="0" y="4" width="16" height="8.500" fill="#7d7a0c"/><text x="8" y="10.600" font-family="Liberation Mono,monospace" font-weight="bold" font-size="7" fill="#fff" text-anchor="middle" textLength="12" lengthAdjust="spacingAndGlyphs">JPG</text></svg>
<div class="t" style="left:29px;top:239px;letter-spacing:-0.3px">img_2119.jpg</div>
<div class="t" style="left:203px;width:85px;text-align:right;top:239px;letter-spacing:-0.2px">1598 KB</div>
<div class="t" style="left:310px;top:239px;letter-spacing:-0.12px">01.01.2006 17:16:28</div>
<div class="t" style="left:431px;top:239px;letter-spacing:-0.1px">New</div>
<div class="a row" style="top:254px"></div>
<svg class="a" style="left:6px;top:255px" width="16" height="16" viewBox="0 0 16 16"><path d="M4.500 .5 H13 L15.500 3 V15.500 H4.500Z" fill="#fafafa" stroke="#858585"/><path d="M6 2.500H12" stroke="#e0e0e0"/><path d="M5.500 13.500H14.500" stroke="#c4c4c4"/><rect x="0" y="4" width="16" height="8.500" fill="#7d7a0c"/><text x="8" y="10.600" font-family="Liberation Mono,monospace" font-weight="bold" font-size="7" fill="#fff" text-anchor="middle" textLength="12" lengthAdjust="spacingAndGlyphs">JPG</text></svg>
<div class="t" style="left:29px;top:257px;letter-spacing:-0.3px">img_2118.jpg</div>
<div class="t" style="left:203px;width:85px;text-align:right;top:257px;letter-spacing:-0.2px">1595 KB</div>
<div class="t" style="left:310px;top:257px;letter-spacing:-0.12px">01.01.2006 17:16:10</div>
<div class="t" style="left:431px;top:257px;letter-spacing:-0.1px">New</div>
<div class="a row" style="top:272px"></div>
<svg class="a" style="left:6px;top:273px" width="16" height="16" viewBox="0 0 16 16"><path d="M4.500 .5 H13 L15.500 3 V15.500 H4.500Z" fill="#fafafa" stroke="#858585"/><path d="M6 2.500H12" stroke="#e0e0e0"/><path d="M5.500 13.500H14.500" stroke="#c4c4c4"/><rect x="0" y="4" width="16" height="8.500" fill="#7d7a0c"/><text x="8" y="10.600" font-family="Liberation Mono,monospace" font-weight="bold" font-size="7" fill="#fff" text-anchor="middle" textLength="12" lengthAdjust="spacingAndGlyphs">JPG</text></svg>
<div class="t" style="left:29px;top:275px;letter-spacing:-0.3px">img_2117.jpg</div>
<div class="t" style="left:203px;width:85px;text-align:right;top:275px;letter-spacing:-0.2px">1668 KB</div>
<div class="t" style="left:310px;top:275px;letter-spacing:-0.12px">01.01.2006 17:16:00</div>
<div class="t" style="left:431px;top:275px;letter-spacing:-0.1px">New</div>
<div class="a row" style="top:290px"></div>
<svg class="a" style="left:6px;top:291px" width="16" height="16" viewBox="0 0 16 16"><path d="M4.500 .5 H13 L15.500 3 V15.500 H4.500Z" fill="#fafafa" stroke="#858585"/><path d="M6 2.500H12" stroke="#e0e0e0"/><path d="M5.500 13.500H14.500" stroke="#c4c4c4"/><rect x="0" y="4" width="16" height="8.500" fill="#7d7a0c"/><text x="8" y="10.600" font-family="Liberation Mono,monospace" font-weight="bold" font-size="7" fill="#fff" text-anchor="middle" textLength="12" lengthAdjust="spacingAndGlyphs">JPG</text></svg>
<div class="t" style="left:29px;top:293px;letter-spacing:-0.3px">img_2116.jpg</div>
<div class="t" style="left:203px;width:85px;text-align:right;top:293px;letter-spacing:-0.2px">1725 KB</div>
<div class="t" style="left:310px;top:293px;letter-spacing:-0.12px">01.01.2006 17:15:56</div>
<div class="t" style="left:431px;top:293px;letter-spacing:-0.1px">New</div>
<div class="a row" style="top:308px"></div>
<svg class="a" style="left:6px;top:309px" width="16" height="16" viewBox="0 0 16 16"><path d="M4.500 .5 H13 L15.500 3 V15.500 H4.500Z" fill="#fafafa" stroke="#858585"/><path d="M6 2.500H12" stroke="#e0e0e0"/><path d="M5.500 13.500H14.500" stroke="#c4c4c4"/><rect x="0" y="4" width="16" height="8.500" fill="#7d7a0c"/><text x="8" y="10.600" font-family="Liberation Mono,monospace" font-weight="bold" font-size="7" fill="#fff" text-anchor="middle" textLength="12" lengthAdjust="spacingAndGlyphs">JPG</text></svg>
<div class="t" style="left:29px;top:311px;letter-spacing:-0.3px">img_2115.jpg</div>
<div class="t" style="left:203px;width:85px;text-align:right;top:311px;letter-spacing:-0.2px">1723 KB</div>
<div class="t" style="left:310px;top:311px;letter-spacing:-0.12px">01.01.2006 17:15:56</div>
<div class="t" style="left:431px;top:311px;letter-spacing:-0.1px">New</div>
<div class="a row" style="top:326px"></div>
<svg class="a" style="left:6px;top:327px" width="16" height="16" viewBox="0 0 16 16"><path d="M4.500 .5 H13 L15.500 3 V15.500 H4.500Z" fill="#fafafa" stroke="#858585"/><path d="M6 2.500H12" stroke="#e0e0e0"/><path d="M5.500 13.500H14.500" stroke="#c4c4c4"/><rect x="0" y="4" width="16" height="8.500" fill="#7d7a0c"/><text x="8" y="10.600" font-family="Liberation Mono,monospace" font-weight="bold" font-size="7" fill="#fff" text-anchor="middle" textLength="12" lengthAdjust="spacingAndGlyphs">JPG</text></svg>
<div class="t" style="left:29px;top:329px;letter-spacing:-0.3px">img_2114.jpg</div>
<div class="t" style="left:203px;width:85px;text-align:right;top:329px;letter-spacing:-0.2px">1689 KB</div>
<div class="t" style="left:310px;top:329px;letter-spacing:-0.12px">01.01.2006 17:15:52</div>
<div class="t" style="left:431px;top:329px;letter-spacing:-0.1px">New</div>
<div class="a sbv" style="left:518px;top:19px;height:323px"></div>
<div class="a sbtn" style="left:519px;top:20px;width:15px;height:16px"></div><svg class="a" style="left:522px;top:25px" width="9" height="6" viewBox="0 0 9 6"><path d="M1 5 L4.5 1.5 L8 5" fill="none" stroke="#4d6185" stroke-width="2"/></svg>
<div class="a sbtn" style="left:519px;top:324px;width:15px;height:16px"></div><svg class="a" style="left:522px;top:330px" width="9" height="6" viewBox="0 0 9 6"><path d="M1 1 L4.5 4.5 L8 1" fill="none" stroke="#4d6185" stroke-width="2"/></svg>
<div class="a thv" style="left:519px;top:37px;height:183px;width:15px"><div class="a" style="left:3px;top:88px;width:6px;height:8px;background:repeating-linear-gradient(to bottom,#eef4fe 0,#eef4fe 1px,#8cb0f8 1px,#8cb0f8 2px)"></div></div>
</div>
<div class="a" style="left:234px;top:555px;width:536px;height:36px;border-top:1px solid #aca899;border-left:1px solid #aca899;box-shadow:inset 1px 1px 0 #fff"></div>
<div class="a chk" style="left:246px;top:567px"></div>
<div class="t" style="left:262px;top:567px;letter-spacing:-0.3px">Batch Rename:</div>
<div class="a" style="left:230px;top:212px;width:1px;height:379px;background:#aca899"></div>
<div class="a" style="left:231px;top:212px;width:1px;height:379px;background:#fff"></div>
<div class="t" style="left:13px;top:599px;letter-spacing:-0.3px">Example file name:</div>
<div class="t" style="left:107px;top:599px;letter-spacing:-0.1px">C:\Pictures\Canon EOS 350D DIGITAL\2005\Autumn\[2005-10-07]\IMG_05231.JPG</div>
<div class="a sbar"></div>
<div class="t" style="left:8px;top:623px;letter-spacing:0.1px">Total: 2111 file(s)</div>
<div class="a ss" style="left:102px"></div>
<div class="t" style="left:109px;top:623px;letter-spacing:-0.4px">4,13 GB</div>
<div class="a ss" style="left:155px"></div>
<div class="a ss" style="left:638px"></div>
<div class="t" style="left:646px;top:623px;letter-spacing:0.05px">[2006-01-01]: 28 file(s)</div>
<svg class="a" style="left:769px;top:625px" width="13" height="13" viewBox="0 0 13 13"><rect x="9" y="1" width="2" height="2" fill="#b8b4a2"/><rect x="11" y="3" width="1" height="1" fill="#fff"/><rect x="5" y="5" width="2" height="2" fill="#b8b4a2"/><rect x="7" y="7" width="1" height="1" fill="#fff"/><rect x="9" y="5" width="2" height="2" fill="#b8b4a2"/><rect x="11" y="7" width="1" height="1" fill="#fff"/><rect x="1" y="9" width="2" height="2" fill="#b8b4a2"/><rect x="3" y="11" width="1" height="1" fill="#fff"/><rect x="5" y="9" width="2" height="2" fill="#b8b4a2"/><rect x="7" y="11" width="1" height="1" fill="#fff"/><rect x="9" y="9" width="2" height="2" fill="#b8b4a2"/><rect x="11" y="11" width="1" height="1" fill="#fff"/></svg>
<div class="a dlg">
<div class="a dtitle"></div><div class="a dbl"></div><div class="a dbr"></div><div class="a dbb"></div>
<div class="t ttxt" style="left:8px;top:9px;letter-spacing:0;font-size:13.5px">Transfer Files...</div>
<div class="a cb x" style="left:397px;top:5px"><svg class="a" style="left:3px;top:3px" width="13" height="13" viewBox="0 0 13 13"><path d="M2 2 L11 11 M11 2 L2 11" stroke="#fff" stroke-width="2.2"/></svg></div>
<div class="t" style="left:139px;top:38px;letter-spacing:-0.05px">Copy: 6,30 MB/s, 11 minute(s)</div>
<div class="t" style="left:18px;top:80px;letter-spacing:-0.1px">Transferred: 57,35 MB of 4,13 GB</div>
<div class="t" style="left:18px;top:102px;letter-spacing:-0.14px">Transferring 20060214_IMG_00530.JPG</div>
<div class="a" style="left:330px;top:45px;width:73px;height:73px;background:#484848;border:1px solid #1c1c1c"></div>
<svg class="a" style="left:331px;top:55px" width="71" height="53" viewBox="0 0 71 53"><rect width="71" height="53" fill="#000"/><g transform="translate(0,1)"><svg width="71" height="51" viewBox="0 0 71 51" overflow="hidden"><rect width="71" height="51" fill="#84b5ea"/><path d="M30 51 L34 40 L29 31 L36 22 L44 17 L52 14 L62 16 L71 19 V51Z" fill="#456f35"/><path d="M0 51 V38 L6 36 L10 44 L9 51Z" fill="#4f7256"/><circle cx="49.6" cy="35.6" r="3.3" fill="#2f5226"/><circle cx="49.6" cy="45.9" r="1.9" fill="#65934e"/><circle cx="50.6" cy="37.5" r="1.9" fill="#2f5226"/><circle cx="43.8" cy="19.2" r="3.1" fill="#5b8a45"/><circle cx="55.2" cy="29.9" r="2.4" fill="#65934e"/><circle cx="57.4" cy="37.8" r="3.2" fill="#5b8a45"/><circle cx="34.3" cy="22.7" r="2.0" fill="#5b8a45"/><circle cx="62.3" cy="27.4" r="2.7" fill="#35592a"/><circle cx="52.2" cy="38.4" r="2.5" fill="#5b8a45"/><circle cx="49.8" cy="25.7" r="3.5" fill="#5b8a45"/><circle cx="59.6" cy="27.0" r="2.0" fill="#4d7a3b"/><circle cx="33.2" cy="35.7" r="1.7" fill="#5b8a45"/><circle cx="65.0" cy="29.5" r="3.4" fill="#5b8a45"/><circle cx="40.3" cy="48.4" r="1.6" fill="#2f5226"/><circle cx="70.2" cy="29.9" r="1.6" fill="#35592a"/><circle cx="62.4" cy="25.4" r="1.7" fill="#4d7a3b"/><circle cx="32.6" cy="30.4" r="3.3" fill="#35592a"/><circle cx="41.6" cy="19.5" r="1.6" fill="#2f5226"/><circle cx="38.9" cy="35.6" r="2.4" fill="#35592a"/><circle cx="70.4" cy="42.9" r="2.3" fill="#2f5226"/><circle cx="36.5" cy="30.7" r="1.9" fill="#4d7a3b"/><circle cx="65.7" cy="50.1" r="2.7" fill="#5b8a45"/><circle cx="40.2" cy="29.8" r="3.2" fill="#65934e"/><circle cx="35.9" cy="50.6" r="1.9" fill="#4d7a3b"/><circle cx="32.4" cy="37.4" r="3.2" fill="#2f5226"/><circle cx="54.7" cy="24.5" r="2.7" fill="#4d7a3b"/><circle cx="56.3" cy="20.5" r="2.7" fill="#65934e"/><circle cx="37.3" cy="29.5" r="2.8" fill="#4d7a3b"/><circle cx="67.4" cy="44.6" r="2.0" fill="#35592a"/><circle cx="38.2" cy="38.0" r="2.6" fill="#2f5226"/><circle cx="66.4" cy="37.1" r="2.3" fill="#5b8a45"/><circle cx="36.3" cy="33.9" r="2.0" fill="#2f5226"/><circle cx="42.0" cy="44.8" r="2.7" fill="#4d7a3b"/><circle cx="52.3" cy="48.5" r="3.5" fill="#35592a"/><circle cx="40.9" cy="35.6" r="3.2" fill="#65934e"/><circle cx="34.9" cy="23.4" r="3.3" fill="#5b8a45"/><circle cx="34.7" cy="30.4" r="2.0" fill="#5b8a45"/><circle cx="38.9" cy="28.9" r="2.6" fill="#35592a"/><circle cx="35.6" cy="20.8" r="2.4" fill="#4d7a3b"/><path d="M6 51 L24 33 L40 19 L57 7 L71 -1" stroke="#8f7d75" stroke-width="3.2" fill="none"/><path d="M57 7 L71 -2" stroke="#4a3a32" stroke-width="4" fill="none"/><path d="M21 0 L24 12 L22 30 M0 18 L10 38 L16 51 M34 0 L31 14 L26 30 M60 20 L56 40 L58 51" stroke="#85645c" stroke-width="1.3" fill="none"/><circle cx="4.1" cy="4.3" r="1.5" fill="#f0c0c6"/><circle cx="3.6" cy="6.0" r="1.4" fill="#b8404a"/><circle cx="4.4" cy="6.2" r="0.8" fill="#f6e2e4"/><circle cx="2.9" cy="4.6" r="1.2" fill="#f6e2e4"/><circle cx="0.0" cy="3.3" r="1.7" fill="#f0c0c6"/><circle cx="5.1" cy="5.9" r="1.2" fill="#f3d4d6"/><circle cx="16.8" cy="14.6" r="1.3" fill="#fbf2f2"/><circle cx="16.5" cy="12.5" r="1.5" fill="#fdf8f6"/><circle cx="13.2" cy="8.6" r="0.9" fill="#f6e2e4"/><circle cx="15.0" cy="15.5" r="1.9" fill="#b8404a"/><circle cx="13.2" cy="13.6" r="1.5" fill="#f3d4d6"/><circle cx="13.7" cy="12.3" r="1.4" fill="#fbeeee"/><circle cx="4.7" cy="32.7" r="1.4" fill="#e59aa4"/><circle cx="11.2" cy="29.3" r="1.7" fill="#f3d4d6"/><circle cx="6.3" cy="28.6" r="1.2" fill="#eec8cc"/><circle cx="5.9" cy="29.7" r="1.9" fill="#f3d4d6"/><circle cx="8.0" cy="30.2" r="1.3" fill="#d0606a"/><circle cx="5.9" cy="31.5" r="1.8" fill="#e59aa4"/><circle cx="18.7" cy="23.2" r="1.5" fill="#b8404a"/><circle cx="14.0" cy="21.4" r="1.2" fill="#fbf2f2"/><circle cx="17.5" cy="27.2" r="1.1" fill="#f0c0c6"/><circle cx="13.3" cy="23.8" r="1.9" fill="#fdf8f6"/><circle cx="15.2" cy="24.1" r="1.6" fill="#eec8cc"/><circle cx="15.7" cy="21.0" r="0.8" fill="#eec8cc"/><circle cx="22.8" cy="11.5" r="1.5" fill="#d0606a"/><circle cx="27.0" cy="10.4" r="1.6" fill="#fdf8f6"/><circle cx="25.7" cy="6.7" r="1.8" fill="#e59aa4"/><circle cx="28.0" cy="12.1" r="2.0" fill="#f6e2e4"/><circle cx="25.6" cy="10.9" r="1.6" fill="#b8404a"/><circle cx="29.2" cy="11.3" r="1.0" fill="#f3d4d6"/><circle cx="26.3" cy="21.5" r="1.7" fill="#fbeeee"/><circle cx="29.5" cy="17.8" r="1.1" fill="#b8404a"/><circle cx="28.3" cy="23.1" r="1.4" fill="#f0c0c6"/><circle cx="27.3" cy="22.0" r="1.9" fill="#f6e2e4"/><circle cx="27.4" cy="22.7" r="1.3" fill="#f3d4d6"/><circle cx="27.7" cy="20.9" r="1.9" fill="#fdf8f6"/><circle cx="10.4" cy="43.1" r="1.4" fill="#b8404a"/><circle cx="9.7" cy="43.1" r="1.0" fill="#f6e2e4"/><circle cx="8.0" cy="44.8" r="2.0" fill="#d0606a"/><circle cx="10.3" cy="44.0" r="1.2" fill="#fbf2f2"/><circle cx="8.9" cy="39.1" r="1.3" fill="#fbeeee"/><circle cx="9.4" cy="40.4" r="1.9" fill="#e59aa4"/><circle cx="20.2" cy="43.9" r="1.8" fill="#f0c0c6"/><circle cx="18.2" cy="48.3" r="1.9" fill="#f3d4d6"/><circle cx="15.5" cy="47.1" r="1.7" fill="#f3d4d6"/><circle cx="21.1" cy="46.9" r="1.9" fill="#f6e2e4"/><circle cx="19.8" cy="46.6" r="1.5" fill="#fbeeee"/><circle cx="19.0" cy="47.2" r="1.8" fill="#fbeeee"/><circle cx="0.3" cy="39.2" r="1.9" fill="#eec8cc"/><circle cx="-0.0" cy="40.5" r="2.0" fill="#fbeeee"/><circle cx="0.4" cy="38.0" r="1.3" fill="#f6e2e4"/><circle cx="2.0" cy="38.7" r="0.8" fill="#fbf2f2"/><circle cx="2.1" cy="37.3" r="1.8" fill="#eec8cc"/><circle cx="-0.6" cy="35.2" r="1.0" fill="#fbeeee"/><circle cx="23.7" cy="30.9" r="1.8" fill="#fdf8f6"/><circle cx="22.4" cy="27.8" r="1.0" fill="#fdf8f6"/><circle cx="26.8" cy="31.0" r="1.9" fill="#fbeeee"/><circle cx="22.7" cy="25.8" r="1.5" fill="#d0606a"/><circle cx="21.4" cy="30.0" r="0.8" fill="#e59aa4"/><circle cx="21.6" cy="24.6" r="1.1" fill="#b8404a"/><circle cx="34.2" cy="24.0" r="1.4" fill="#eec8cc"/><circle cx="33.4" cy="24.1" r="1.1" fill="#e59aa4"/><circle cx="37.4" cy="26.7" r="0.8" fill="#fdf8f6"/><circle cx="38.3" cy="24.8" r="1.4" fill="#fbeeee"/><circle cx="37.0" cy="24.2" r="1.8" fill="#eec8cc"/><circle cx="36.6" cy="21.5" r="1.9" fill="#b8404a"/><circle cx="46.8" cy="12.7" r="1.2" fill="#e59aa4"/><circle cx="42.0" cy="17.5" r="1.9" fill="#f0c0c6"/><circle cx="46.7" cy="11.4" r="0.9" fill="#fdf8f6"/><circle cx="41.2" cy="16.3" r="1.3" fill="#f0c0c6"/><circle cx="41.9" cy="14.9" r="1.8" fill="#f6e2e4"/><circle cx="41.9" cy="15.3" r="1.9" fill="#b8404a"/><circle cx="2.3" cy="8.0" r="1.7" fill="#fbeeee"/><circle cx="8.5" cy="10.3" r="1.8" fill="#f3d4d6"/><circle cx="2.2" cy="4.8" r="1.5" fill="#fbeeee"/><circle cx="7.8" cy="7.9" r="1.0" fill="#f6e2e4"/><circle cx="2.9" cy="10.4" r="2.0" fill="#f6e2e4"/><circle cx="5.6" cy="5.4" r="1.6" fill="#f6e2e4"/><circle cx="11.9" cy="1.8" r="1.4" fill="#fbeeee"/><circle cx="9.0" cy="1.0" r="1.2" fill="#fbf2f2"/><circle cx="12.4" cy="0.8" r="1.3" fill="#b8404a"/><circle cx="9.3" cy="0.9" r="1.0" fill="#fbeeee"/><circle cx="12.0" cy="1.8" r="0.9" fill="#fdf8f6"/><circle cx="10.5" cy="0.8" r="1.5" fill="#b8404a"/><circle cx="10.1" cy="18.3" r="1.9" fill="#f0c0c6"/><circle cx="10.2" cy="19.3" r="1.9" fill="#fbeeee"/><circle cx="9.4" cy="21.9" r="1.7" fill="#fdf8f6"/><circle cx="5.9" cy="17.8" r="1.8" fill="#d0606a"/><circle cx="7.8" cy="16.6" r="1.2" fill="#eec8cc"/><circle cx="4.8" cy="18.4" r="2.0" fill="#d0606a"/><circle cx="1.9" cy="29.1" r="1.5" fill="#fbeeee"/><circle cx="0.0" cy="28.1" r="1.4" fill="#e59aa4"/><circle cx="4.4" cy="29.8" r="2.0" fill="#fbf2f2"/><circle cx="0.3" cy="25.3" r="1.1" fill="#f3d4d6"/><circle cx="2.3" cy="24.9" r="1.0" fill="#fdf8f6"/><circle cx="-0.4" cy="26.3" r="1.1" fill="#b8404a"/><circle cx="20.4" cy="16.1" r="2.0" fill="#eec8cc"/><circle cx="22.4" cy="13.2" r="1.3" fill="#f6e2e4"/><circle cx="20.3" cy="17.2" r="1.9" fill="#fdf8f6"/><circle cx="23.0" cy="13.6" r="1.4" fill="#f0c0c6"/><circle cx="22.5" cy="16.3" r="1.5" fill="#fdf8f6"/><circle cx="23.1" cy="15.4" r="1.4" fill="#eec8cc"/><circle cx="20.7" cy="22.2" r="1.4" fill="#d0606a"/><circle cx="22.4" cy="20.5" r="1.7" fill="#d0606a"/><circle cx="18.7" cy="23.9" r="1.5" fill="#f0c0c6"/><circle cx="21.4" cy="23.3" r="0.9" fill="#b8404a"/><circle cx="23.7" cy="18.9" r="2.0" fill="#b8404a"/><circle cx="19.0" cy="24.8" r="1.3" fill="#f3d4d6"/><circle cx="15.3" cy="6.8" r="0.9" fill="#f6e2e4"/><circle cx="20.1" cy="6.6" r="1.4" fill="#e59aa4"/><circle cx="17.7" cy="2.3" r="1.5" fill="#f3d4d6"/><circle cx="14.3" cy="7.5" r="1.2" fill="#f0c0c6"/><circle cx="14.4" cy="4.6" r="1.6" fill="#f3d4d6"/><circle cx="17.7" cy="6.0" r="1.6" fill="#b8404a"/><circle cx="31.9" cy="4.2" r="2.0" fill="#d0606a"/><circle cx="31.6" cy="2.2" r="0.9" fill="#d0606a"/><circle cx="32.0" cy="4.9" r="1.2" fill="#d0606a"/><circle cx="30.8" cy="5.6" r="1.6" fill="#e59aa4"/><circle cx="30.9" cy="5.8" r="1.0" fill="#e59aa4"/><circle cx="30.0" cy="5.1" r="1.0" fill="#fbf2f2"/><circle cx="42.9" cy="2.6" r="1.1" fill="#fbf2f2"/><circle cx="42.9" cy="3.2" r="1.4" fill="#f6e2e4"/><circle cx="43.8" cy="8.9" r="1.0" fill="#e59aa4"/><circle cx="42.9" cy="5.1" r="1.4" fill="#e59aa4"/><circle cx="40.9" cy="6.0" r="1.0" fill="#f6e2e4"/><circle cx="44.1" cy="5.6" r="1.8" fill="#e59aa4"/><circle cx="47.6" cy="11.7" r="1.3" fill="#f0c0c6"/><circle cx="47.1" cy="11.1" r="2.0" fill="#b8404a"/><circle cx="46.5" cy="11.8" r="1.8" fill="#f0c0c6"/><circle cx="47.5" cy="9.1" r="0.9" fill="#b8404a"/><circle cx="45.0" cy="7.1" r="1.5" fill="#f3d4d6"/><circle cx="50.2" cy="9.7" r="1.8" fill="#fbf2f2"/><circle cx="53.0" cy="-0.0" r="1.6" fill="#f6e2e4"/><circle cx="57.4" cy="2.0" r="1.7" fill="#b8404a"/><circle cx="54.5" cy="-0.5" r="1.2" fill="#b8404a"/><circle cx="55.1" cy="-0.7" r="1.7" fill="#eec8cc"/><circle cx="56.7" cy="4.8" r="1.6" fill="#d0606a"/><circle cx="55.6" cy="4.1" r="1.2" fill="#b8404a"/><circle cx="31.0" cy="33.3" r="1.7" fill="#fbeeee"/><circle cx="31.2" cy="29.0" r="1.2" fill="#b8404a"/><circle cx="34.2" cy="30.6" r="1.8" fill="#eec8cc"/><circle cx="32.1" cy="29.2" r="1.0" fill="#eec8cc"/><circle cx="33.4" cy="27.7" r="1.7" fill="#d0606a"/><circle cx="35.2" cy="28.0" r="0.9" fill="#f0c0c6"/><circle cx="37.5" cy="36.3" r="1.6" fill="#fdf8f6"/><circle cx="33.9" cy="33.3" r="1.7" fill="#f6e2e4"/><circle cx="35.8" cy="31.4" r="0.9" fill="#b8404a"/><circle cx="34.1" cy="33.9" r="1.0" fill="#fdf8f6"/><circle cx="35.2" cy="31.0" r="1.7" fill="#fbeeee"/><circle cx="35.9" cy="32.7" r="1.2" fill="#b8404a"/><circle cx="21.2" cy="40.0" r="1.4" fill="#f6e2e4"/><circle cx="21.5" cy="42.9" r="1.3" fill="#b8404a"/><circle cx="22.5" cy="42.1" r="1.8" fill="#f3d4d6"/><circle cx="23.2" cy="41.0" r="1.4" fill="#fbf2f2"/><circle cx="22.1" cy="39.5" r="1.3" fill="#f0c0c6"/><circle cx="18.2" cy="37.6" r="1.6" fill="#f0c0c6"/><circle cx="22.7" cy="43.2" r="1.4" fill="#d0606a"/><circle cx="27.3" cy="40.9" r="1.2" fill="#f6e2e4"/><circle cx="22.6" cy="41.6" r="1.9" fill="#fbf2f2"/><circle cx="25.8" cy="40.6" r="1.4" fill="#fbf2f2"/><circle cx="22.7" cy="41.9" r="1.2" fill="#eec8cc"/><circle cx="22.1" cy="45.5" r="1.5" fill="#e59aa4"/><circle cx="13.6" cy="38.8" r="1.3" fill="#d0606a"/><circle cx="14.9" cy="39.1" r="1.5" fill="#d0606a"/><circle cx="13.9" cy="35.3" r="1.9" fill="#fbeeee"/><circle cx="15.9" cy="33.1" r="1.8" fill="#fdf8f6"/><circle cx="10.8" cy="39.1" r="1.8" fill="#fdf8f6"/><circle cx="17.3" cy="38.1" r="1.7" fill="#fbf2f2"/><circle cx="6.1" cy="42.2" r="0.8" fill="#f3d4d6"/><circle cx="7.8" cy="43.7" r="1.1" fill="#fdf8f6"/><circle cx="5.7" cy="41.6" r="1.0" fill="#b8404a"/><circle cx="2.5" cy="46.9" r="1.8" fill="#f0c0c6"/><circle cx="6.0" cy="47.5" r="1.1" fill="#fbeeee"/><circle cx="1.9" cy="44.5" r="1.0" fill="#e59aa4"/><circle cx="49.2" cy="24.4" r="1.8" fill="#f6e2e4"/><circle cx="46.0" cy="22.8" r="1.4" fill="#f3d4d6"/><circle cx="48.4" cy="19.1" r="1.7" fill="#fbeeee"/><circle cx="49.5" cy="20.6" r="1.7" fill="#fdf8f6"/><circle cx="44.9" cy="23.3" r="1.7" fill="#f3d4d6"/><circle cx="45.0" cy="22.3" r="1.4" fill="#f0c0c6"/><circle cx="63.1" cy="28.2" r="1.2" fill="#fdf8f6"/><circle cx="57.0" cy="23.6" r="1.4" fill="#f6e2e4"/><circle cx="59.0" cy="26.3" r="0.9" fill="#fdf8f6"/><circle cx="61.2" cy="26.7" r="1.7" fill="#f6e2e4"/><circle cx="61.1" cy="21.6" r="1.3" fill="#f3d4d6"/><circle cx="58.2" cy="25.4" r="1.3" fill="#fbf2f2"/><circle cx="70.5" cy="24.4" r="1.7" fill="#eec8cc"/><circle cx="65.6" cy="22.9" r="1.9" fill="#d0606a"/><circle cx="71.2" cy="23.8" r="1.5" fill="#f6e2e4"/><circle cx="66.3" cy="19.9" r="1.7" fill="#b8404a"/><circle cx="66.7" cy="20.4" r="1.4" fill="#b8404a"/><circle cx="67.6" cy="21.2" r="0.9" fill="#eec8cc"/><circle cx="63.2" cy="39.2" r="1.6" fill="#f0c0c6"/><circle cx="63.9" cy="34.8" r="1.4" fill="#f6e2e4"/><circle cx="63.2" cy="34.7" r="2.0" fill="#fdf8f6"/><circle cx="65.3" cy="35.0" r="1.9" fill="#fdf8f6"/><circle cx="69.0" cy="35.5" r="1.0" fill="#f0c0c6"/><circle cx="68.2" cy="37.2" r="1.2" fill="#fdf8f6"/><circle cx="56.9" cy="31.6" r="1.5" fill="#b8404a"/><circle cx="59.4" cy="32.0" r="1.6" fill="#eec8cc"/><circle cx="56.2" cy="28.3" r="1.0" fill="#d0606a"/><circle cx="57.1" cy="27.2" r="1.3" fill="#fbeeee"/><circle cx="54.8" cy="28.6" r="0.9" fill="#f0c0c6"/><circle cx="54.3" cy="30.3" r="1.2" fill="#e59aa4"/><circle cx="45.0" cy="44.0" r="1.0" fill="#e59aa4"/><circle cx="49.4" cy="44.1" r="1.7" fill="#e59aa4"/><circle cx="46.5" cy="40.7" r="1.6" fill="#f6e2e4"/><circle cx="43.5" cy="43.8" r="1.3" fill="#b8404a"/><circle cx="44.8" cy="47.0" r="1.2" fill="#f3d4d6"/><circle cx="48.7" cy="43.7" r="1.7" fill="#e59aa4"/><circle cx="32.8" cy="48.3" r="1.5" fill="#fbeeee"/><circle cx="32.9" cy="45.7" r="1.7" fill="#b8404a"/><circle cx="30.7" cy="45.4" r="1.8" fill="#d0606a"/><circle cx="31.3" cy="47.0" r="1.7" fill="#b8404a"/><circle cx="32.3" cy="45.8" r="1.5" fill="#f6e2e4"/><circle cx="29.7" cy="47.3" r="1.7" fill="#f0c0c6"/><circle cx="10.7" cy="49.2" r="1.7" fill="#fdf8f6"/><circle cx="12.8" cy="49.0" r="1.7" fill="#f0c0c6"/><circle cx="9.9" cy="47.8" r="1.0" fill="#fdf8f6"/><circle cx="9.3" cy="47.3" r="1.2" fill="#f0c0c6"/><circle cx="10.3" cy="48.5" r="1.2" fill="#fbf2f2"/><circle cx="13.6" cy="50.0" r="1.3" fill="#f3d4d6"/><circle cx="12.7" cy="27.8" r="1.3" fill="#eec8cc"/><circle cx="14.9" cy="28.5" r="1.3" fill="#d0606a"/><circle cx="11.9" cy="31.5" r="1.8" fill="#fdf8f6"/><circle cx="14.3" cy="25.3" r="0.9" fill="#fbeeee"/><circle cx="10.8" cy="28.1" r="1.3" fill="#fbf2f2"/><circle cx="10.7" cy="24.9" r="1.7" fill="#fdf8f6"/><circle cx="28.6" cy="38.7" r="1.7" fill="#d0606a"/><circle cx="29.7" cy="40.6" r="1.1" fill="#f3d4d6"/><circle cx="25.2" cy="40.6" r="2.0" fill="#f3d4d6"/><circle cx="28.4" cy="38.2" r="1.1" fill="#d0606a"/><circle cx="28.1" cy="41.1" r="1.9" fill="#b8404a"/><circle cx="29.6" cy="37.4" r="1.8" fill="#e59aa4"/><circle cx="51.0" cy="3.5" r="0.9" fill="#f6e2e4"/><circle cx="47.2" cy="6.0" r="0.9" fill="#fbeeee"/><circle cx="50.5" cy="3.7" r="1.2" fill="#d0606a"/><circle cx="46.7" cy="1.7" r="1.3" fill="#f3d4d6"/><circle cx="52.2" cy="3.3" r="1.2" fill="#eec8cc"/><circle cx="48.1" cy="2.6" r="1.3" fill="#b8404a"/><circle cx="0.7" cy="14.0" r="1.9" fill="#f3d4d6"/><circle cx="4.7" cy="11.9" r="1.8" fill="#fbf2f2"/><circle cx="-0.1" cy="16.4" r="1.2" fill="#f3d4d6"/><circle cx="-1.4" cy="14.9" r="1.6" fill="#fbeeee"/><circle cx="-0.1" cy="14.9" r="1.0" fill="#fbf2f2"/><circle cx="3.1" cy="12.6" r="1.8" fill="#d0606a"/><circle cx="40.6" cy="13.5" r="1.0" fill="#f3d4d6"/><circle cx="37.4" cy="9.7" r="1.8" fill="#f6e2e4"/><circle cx="39.5" cy="9.9" r="1.0" fill="#e59aa4"/><circle cx="38.0" cy="10.6" r="1.1" fill="#fbeeee"/><circle cx="40.7" cy="12.6" r="1.1" fill="#d0606a"/><circle cx="40.8" cy="9.8" r="1.1" fill="#f0c0c6"/></svg></g></svg>
<div class="a pb" style="left:18px;top:125px;width:388px"></div>
<div class="a ch" style="left:22px;top:128px"></div>
<div class="a ch" style="left:30px;top:128px"></div>
<div class="a ch" style="left:38px;top:128px"></div>
<div class="a ch" style="left:46px;top:128px"></div>
<div class="a ch" style="left:54px;top:128px"></div>
<div class="a ch" style="left:62px;top:128px"></div>
<div class="a ch" style="left:70px;top:128px"></div>
<div class="a ch" style="left:78px;top:128px"></div>
<div class="a ch" style="left:86px;top:128px"></div>
<div class="a ch" style="left:94px;top:128px"></div>
<div class="a ch" style="left:102px;top:128px"></div>
<div class="a ch" style="left:110px;top:128px"></div>
<div class="a ch" style="left:118px;top:128px"></div>
<div class="a ch" style="left:126px;top:128px"></div>
<div class="a ch" style="left:134px;top:128px"></div>
<div class="a ch" style="left:142px;top:128px"></div>
<div class="a ch" style="left:150px;top:128px"></div>
<div class="t" style="left:18px;top:149px;letter-spacing:0.04px">Total Progress: 26 of 2111</div>
<div class="t" style="left:340px;width:62px;text-align:right;top:149px">1 %</div>
<div class="a pb" style="left:18px;top:165px;width:388px"></div>
<div class="a ch" style="left:22px;top:168px"></div>
<div class="a btn" style="left:172px;top:193px;width:73px;height:20px"><span class="t" style="left:0;width:71px;text-align:center;top:2px">Cancel</span></div>
<div class="a chk" style="left:331px;top:195px"><svg class="a" style="left:1px;top:1px" width="9" height="9" viewBox="0 0 9 9"><path d="M1 3.500 L3.500 6 L8 1.500" stroke="#21a121" stroke-width="2" fill="none"/></svg></div>
<div class="t" style="left:346.5px;top:196px;letter-spacing:-0.2px">Preview</div>
</div>
</body></html>
